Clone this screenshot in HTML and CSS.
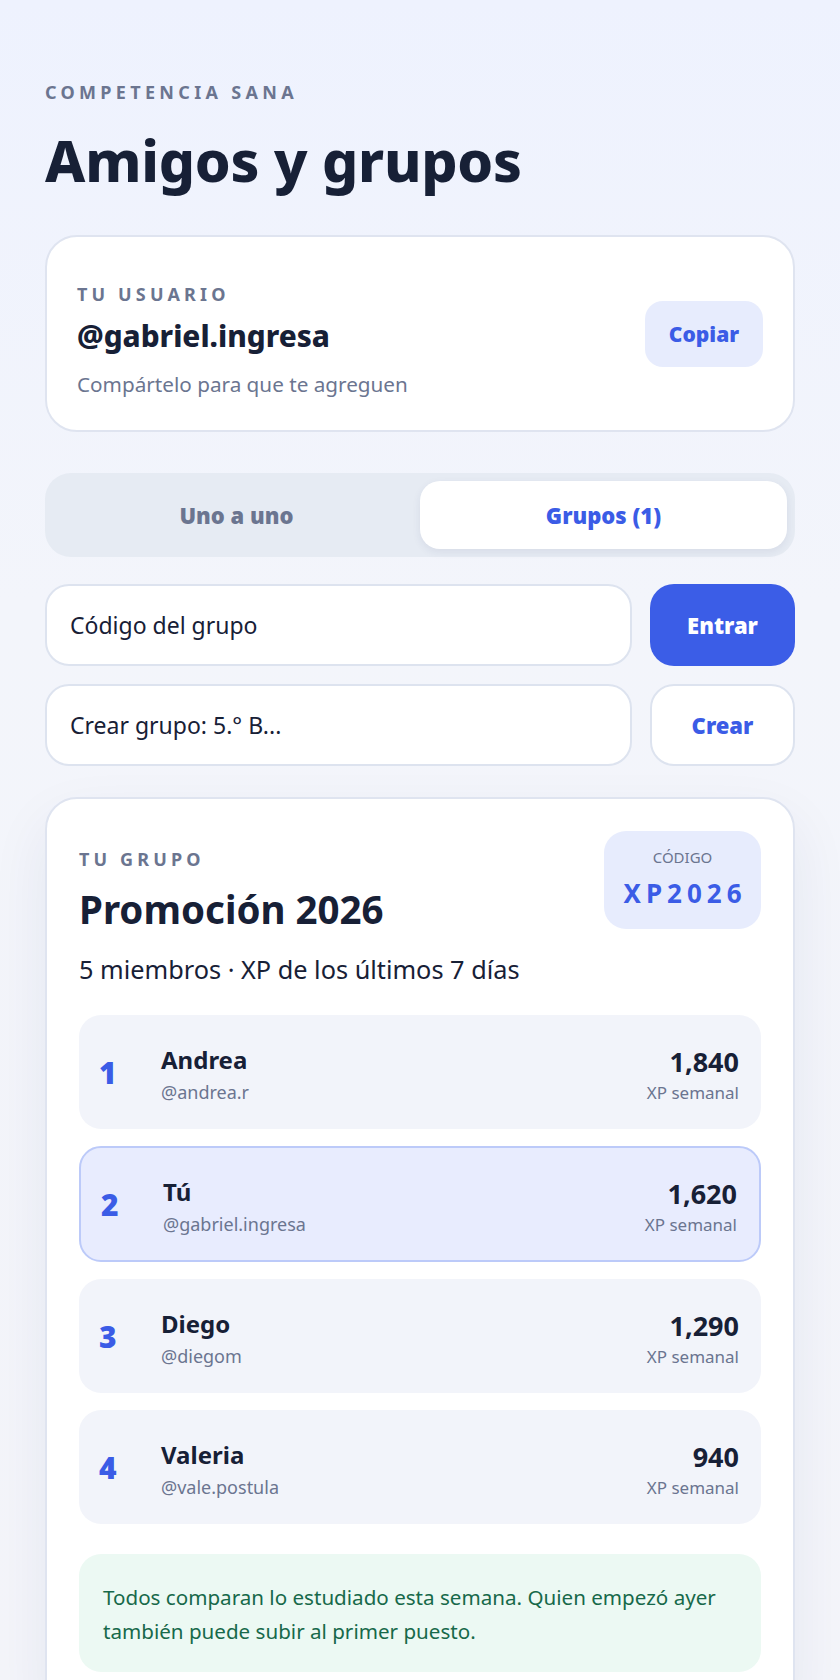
FILE: index.html
```html
<!DOCTYPE html>
<html lang="es">
<head>
<meta charset="utf-8">
<title>Amigos y grupos</title>
<link rel="stylesheet" href="styles.css">
</head>
<body>
<div class="page">
	<p class="eyebrow">Competencia sana</p>
	<h1 class="title">Amigos y grupos</h1>

	<section class="card user-card">
		<div class="user-info">
			<p class="label">Tu usuario</p>
			<p class="handle">@gabriel.ingresa</p>
			<p class="hint">Compártelo para que te agreguen</p>
		</div>
		<button class="btn btn-soft">Copiar</button>
	</section>

	<div class="tabs">
		<button class="tab">Uno a uno</button>
		<button class="tab active">Grupos (1)</button>
	</div>

	<div class="form-row">
		<div class="field">Código del grupo</div>
		<button class="btn btn-primary">Entrar</button>
	</div>
	<div class="form-row">
		<div class="field">Crear grupo: 5.° B...</div>
		<button class="btn btn-outline">Crear</button>
	</div>

	<section class="card group-card">
		<div class="group-head">
			<div class="group-info">
				<p class="label">Tu grupo</p>
				<h2 class="group-name">Promoción 2026</h2>
			</div>
			<div class="code-box">
				<span class="code-label">CÓDIGO</span>
				<span class="code-value">XP2026</span>
			</div>
		</div>
		<p class="group-meta">5 miembros · XP de los últimos 7 días</p>

		<ol class="ranking">
			<li class="rank-row">
				<span class="rank">1</span>
				<div class="member">
					<span class="member-name">Andrea</span>
					<span class="member-handle">@andrea.r</span>
				</div>
				<div class="score">
					<span class="score-value">1,840</span>
					<span class="score-label">XP semanal</span>
				</div>
			</li>
			<li class="rank-row me">
				<span class="rank">2</span>
				<div class="member">
					<span class="member-name">Tú</span>
					<span class="member-handle">@gabriel.ingresa</span>
				</div>
				<div class="score">
					<span class="score-value">1,620</span>
					<span class="score-label">XP semanal</span>
				</div>
			</li>
			<li class="rank-row">
				<span class="rank">3</span>
				<div class="member">
					<span class="member-name">Diego</span>
					<span class="member-handle">@diegom</span>
				</div>
				<div class="score">
					<span class="score-value">1,290</span>
					<span class="score-label">XP semanal</span>
				</div>
			</li>
			<li class="rank-row">
				<span class="rank">4</span>
				<div class="member">
					<span class="member-name">Valeria</span>
					<span class="member-handle">@vale.postula</span>
				</div>
				<div class="score">
					<span class="score-value">940</span>
					<span class="score-label">XP semanal</span>
				</div>
			</li>
		</ol>

		<p class="note">Todos comparan lo estudiado esta semana. Quien empezó ayer también puede subir al primer puesto.</p>
	</section>
</div>
</body>
</html>
```

FILE: styles.css
```css
html, body {
	margin: 0;
}
body {
	font-family: "Noto Sans", sans-serif;
	color: #172036;
	background: linear-gradient(180deg, #eef2fe 0%, #f3f5fb 35%, #f4f5fa 100%);
	min-height: 1680px;
}
p, h1, h2, ol {
	margin: 0;
	padding: 0;
}
button {
	font-family: inherit;
	cursor: pointer;
}

.page {
	padding: 80px 45px 0;
}

.eyebrow {
	font-size: 18px;
	line-height: 24px;
	font-weight: 700;
	letter-spacing: 0.24em;
	text-transform: uppercase;
	color: #6b7590;
}
.title {
	margin-top: 21px;
	font-size: 57px;
	line-height: 70px;
	font-weight: 800;
	letter-spacing: -0.2px;
}

.card {
	background: #fff;
	border: 2px solid #dfe4f0;
	border-radius: 32px;
}

.user-card {
	margin-top: 40px;
	display: flex;
	align-items: center;
	justify-content: space-between;
	padding: 45px 30px 32px;
}
.label {
	font-size: 18px;
	line-height: 24px;
	font-weight: 700;
	letter-spacing: 0.23em;
	text-transform: uppercase;
	color: #6b7590;
}
.handle {
	margin-top: 12px;
	font-size: 29.7px;
	line-height: 36px;
	font-weight: 800;
}
.hint {
	margin-top: 16px;
	font-size: 20.7px;
	line-height: 28px;
	color: #6b7590;
}

.btn {
	border: none;
	font-weight: 900;
	font-size: 21px;
}
.btn-soft {
	width: 118px;
	height: 66px;
	border-radius: 18px;
	background: #e7ecfd;
	color: #3b5ce6;
	margin-top: -12px;
}

.tabs {
	margin-top: 41px;
	display: grid;
	grid-template-columns: 1fr 1fr;
	padding: 8px;
	border-radius: 26px;
	background: #e6ebf3;
}
.tab {
	height: 68px;
	border: none;
	border-radius: 20px;
	background: transparent;
	font-size: 22px;
	font-weight: 900;
	color: #6b7590;
}
.tab.active {
	background: #fff;
	color: #3b5ce6;
	box-shadow: 0 3px 8px rgba(40, 55, 100, 0.08);
}

.form-row {
	margin-top: 18px;
	display: flex;
	gap: 18px;
}
.tabs + .form-row {
	margin-top: 27px;
}
.field {
	flex: 1;
	height: 82px;
	box-sizing: border-box;
	display: flex;
	align-items: center;
	padding: 0 23px;
	background: #fff;
	border: 2px solid #dde3ef;
	border-radius: 24px;
	font-size: 23px;
	color: #172036;
}
.form-row .btn {
	width: 145px;
	height: 82px;
	border-radius: 24px;
	font-size: 22px;
}
.btn-primary {
	background: #3b5de7;
	color: #fff;
}
.btn-outline {
	background: #fff;
	border: 2px solid #dde3ef;
	color: #3b5ce6;
}

.group-card {
	margin-top: 31px;
	padding: 32px 32px 40px;
	box-shadow: 0 24px 60px rgba(30, 45, 100, 0.07);
}
.group-head {
	display: flex;
	justify-content: space-between;
	align-items: flex-start;
}
.group-info {
	padding-top: 16px;
}
.group-name {
	margin-top: 15px;
	font-size: 38.5px;
	line-height: 46px;
	font-weight: 700;
}
.code-box {
	width: 157px;
	height: 98px;
	box-sizing: border-box;
	padding-top: 15px;
	border-radius: 22px;
	background: #e7ecfd;
	display: flex;
	flex-direction: column;
	align-items: center;
}
.code-label {
	font-size: 15px;
	line-height: 22px;
	color: #6b7590;
}
.code-value {
	margin-top: 8px;
	font-size: 26px;
	line-height: 34px;
	font-weight: 700;
	letter-spacing: 5px;
	margin-right: -5px;
	color: #3b5ce6;
}
.group-meta {
	margin-top: 20px;
	font-size: 25.3px;
	line-height: 34px;
}

.ranking {
	list-style: none;
	margin-top: 29px;
	display: flex;
	flex-direction: column;
	gap: 17px;
}
.rank-row {
	height: 114px;
	box-sizing: border-box;
	display: flex;
	align-items: center;
	padding: 0 22px 0 20px;
	border-radius: 22px;
	background: #f2f4fa;
}
.rank-row.me {
	height: 116px;
	border: 2px solid #bccaf9;
	background: #e8ecfe;
}
.rank {
	width: 40px;
	margin-right: 22px;
	font-size: 30px;
	font-weight: 900;
	color: #3b5ce6;
}
.member {
	flex: 1;
	display: flex;
	flex-direction: column;
	gap: 5px;
	margin-top: 4px;
}
.member-name {
	font-size: 24px;
	line-height: 30px;
	font-weight: 700;
}
.member-handle, .score-label {
	font-size: 18px;
	line-height: 24px;
	color: #6b7590;
}
.score {
	display: flex;
	flex-direction: column;
	align-items: flex-end;
	gap: 2px;
	margin-top: 6px;
}
.score-value {
	font-size: 27px;
	line-height: 34px;
	font-weight: 700;
}
.score-label {
	font-size: 17px;
}

.note {
	margin-top: 30px;
	padding: 26px 24px 24px;
	border-radius: 22px;
	background: #ecf9f3;
	color: #17694a;
	font-size: 20.6px;
	line-height: 34px;
}
```
